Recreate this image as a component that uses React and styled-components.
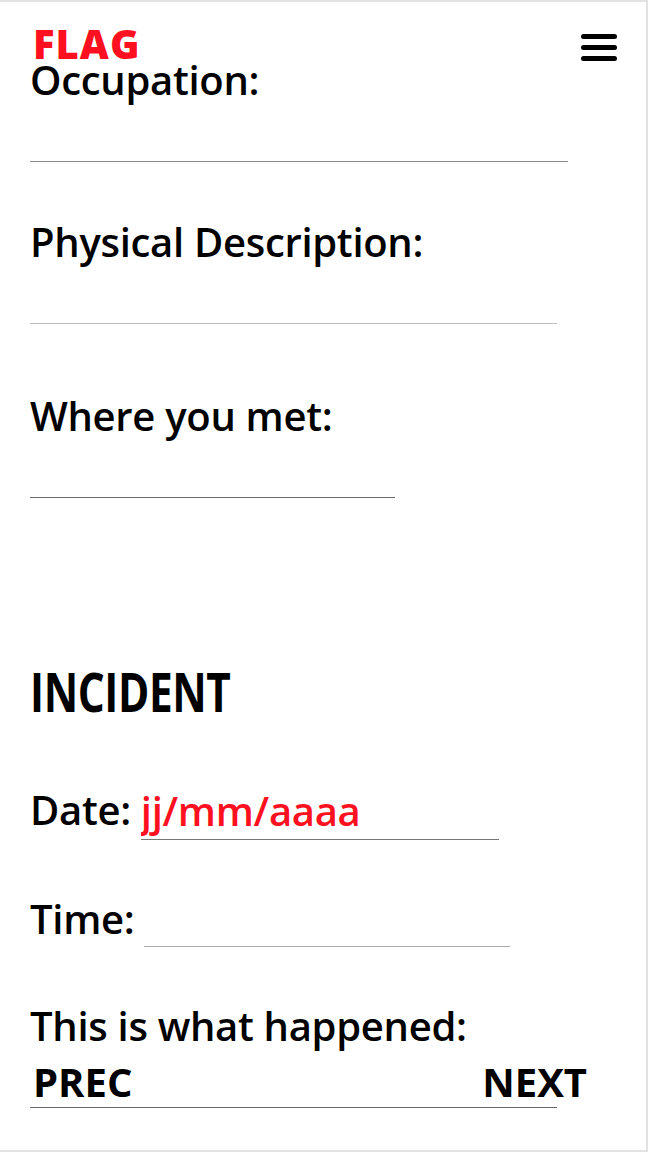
import styled, { createGlobalStyle } from 'styled-components'

const GlobalStyle = createGlobalStyle`
  html, body {
    margin: 0;
    padding: 0;
    background: #fff;
  }
  body {
    font-family: 'Open Sans', 'Noto Sans', sans-serif;
    color: #000;
  }
`

const Frame = styled.div`
  position: relative;
  box-sizing: border-box;
  width: 648px;
  height: 1152px;
  border-top: 2px solid #e2e2e2;
  border-right: 2px solid #e2e2e2;
  border-bottom: 2px solid #e2e2e2;
  overflow: hidden;
`

const Header = styled.header`
  position: absolute;
  top: 0;
  left: 0;
  right: 0;
  display: flex;
  justify-content: space-between;
  align-items: flex-start;
  padding: 20px 29px 0 33px;
  z-index: 2;
`

const Logo = styled.div`
  font-weight: 800;
  font-size: 40px;
  line-height: 44px;
  color: #ff1020;
  letter-spacing: 1px;
`

const MenuButton = styled.button`
  display: flex;
  flex-direction: column;
  gap: 6px;
  margin-top: 12px;
  padding: 0;
  border: none;
  background: none;
  cursor: pointer;

  span {
    display: block;
    width: 36px;
    height: 5px;
    border-radius: 3px;
    background: #000;
  }
`

const Form = styled.form`
  display: flex;
  flex-direction: column;
  padding: 54px 0 0 30px;
`

const Field = styled.div`
  display: flex;
  flex-direction: column;
  margin-bottom: ${p => p.$gap || 0}px;
`

const Label = styled.label`
  display: block;
  font-size: 40px;
  font-weight: 600;
  line-height: 48px;
  letter-spacing: -0.3px;
  white-space: nowrap;
`

const Line = styled.input`
  box-sizing: border-box;
  width: ${p => p.$width}px;
  height: ${p => p.$height || 40}px;
  margin: ${p => p.$top || 0}px 0 0 ${p => p.$left || 0}px;
  padding: 0 0 ${p => p.$pad || 0}px;
  border: none;
  border-bottom: 1px solid ${p => p.$tone || '#888'};
  outline: none;
  background: transparent;
  font-family: inherit;
  font-size: 40px;
  font-weight: 600;
  line-height: 48px;
  letter-spacing: -0.3px;

  &::placeholder {
    color: #ff1020;
    opacity: 1;
  }
`

const Heading = styled.h2`
  margin: 167px 0 67px;
  font-size: 53px;
  font-weight: 700;
  line-height: 54px;
  letter-spacing: -0.5px;
  transform: scaleX(0.8);
  transform-origin: left center;
`

const InlineField = styled.div`
  display: flex;
  align-items: flex-start;
  margin-bottom: ${p => p.$gap || 0}px;
`

const Pager = styled.nav`
  position: absolute;
  left: 33px;
  right: 59px;
  top: 1056px;
  display: flex;
  justify-content: space-between;
  z-index: 2;
`

const PageLink = styled.a`
  font-size: 40px;
  font-weight: 700;
  line-height: 48px;
  color: #000;
  text-decoration: none;
  cursor: pointer;
`

export default function App() {
  return (
    <>
      <GlobalStyle />
      <Frame>
        <Header>
          <Logo>FLAG</Logo>
          <MenuButton type="button" aria-label="Menu">
            <span />
            <span />
            <span />
          </MenuButton>
        </Header>

        <Form onSubmit={e => e.preventDefault()}>
          <Field $gap={56}>
            <Label>Occupation:</Label>
            <Line $width={538} $top={18} $tone="#8a8a8a" />
          </Field>
          <Field $gap={68}>
            <Label>Physical Description:</Label>
            <Line $width={527} $top={18} $tone="#bdbdbd" />
          </Field>
          <Field>
            <Label>Where you met:</Label>
            <Line $width={365} $top={18} $tone="#6a6a6a" />
          </Field>

          <Heading>INCIDENT</Heading>

          <InlineField $gap={55}>
            <Label>Date:</Label>
            <Line $width={358} $height={54} $pad={5} $left={10} $tone="#777" placeholder="jj/mm/aaaa" />
          </InlineField>
          <InlineField $gap={55}>
            <Label>Time:</Label>
            <Line $width={366} $height={52} $pad={3} $left={10} $tone="#aaa" />
          </InlineField>
          <Field>
            <Label>This is what happened:</Label>
            <Line $width={527} $top={18} $tone="#666" />
          </Field>
        </Form>

        <Pager>
          <PageLink>PREC</PageLink>
          <PageLink>NEXT</PageLink>
        </Pager>
      </Frame>
    </>
  )
}
